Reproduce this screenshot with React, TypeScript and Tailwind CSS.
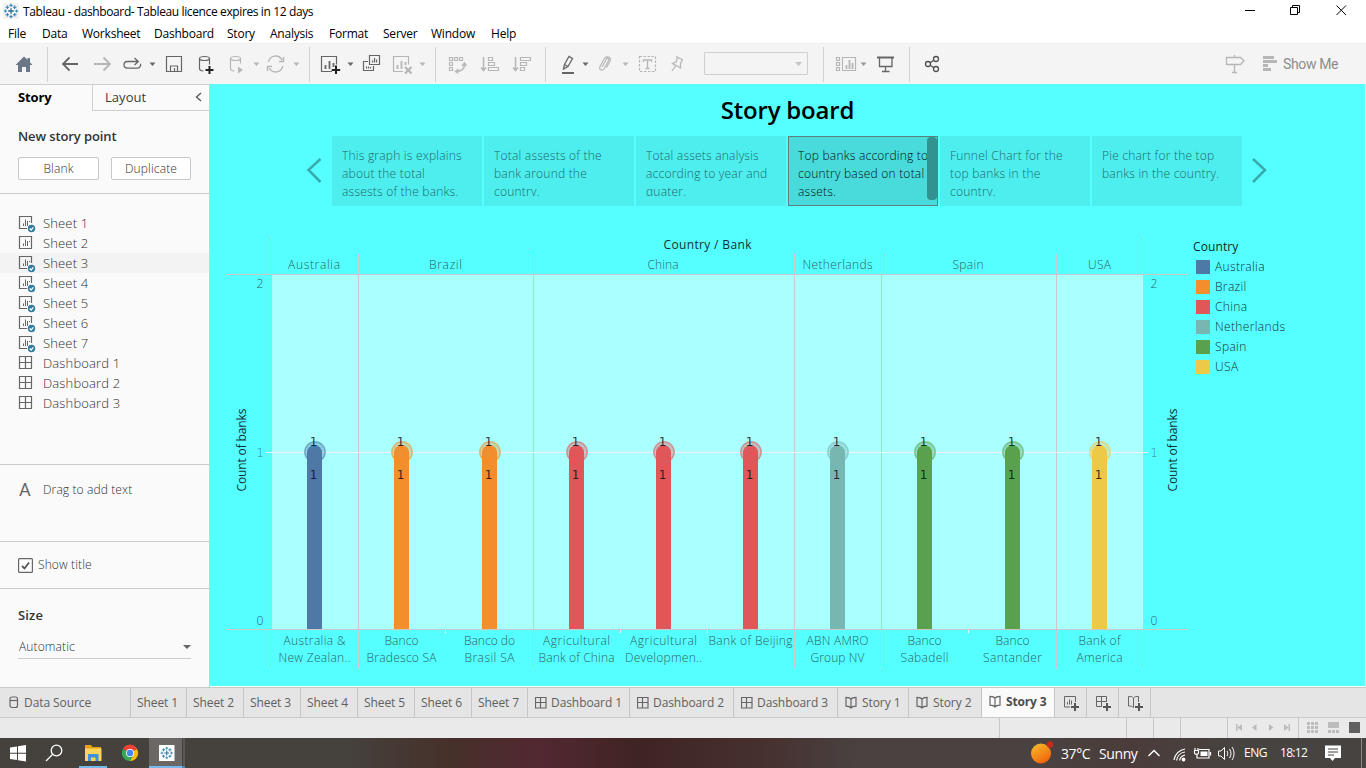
import React from "react";

type IcoProps = { x: number; w: number; y?: number; h?: number; c?: string; children?: React.ReactNode };

/* Icon cell: drawing coordinates are window coordinates. */
const Ico = ({ x, w, y = 44, h = 40, c = "#666", children }: IcoProps) => (
  <svg width={w} height={h} viewBox={`${x} ${y} ${w} ${h}`} fill="none" stroke={c} strokeWidth="1.2" className="block shrink-0">
    {children}
  </svg>
);

const Caret = ({ x, c = "#666" }: { x: number; c?: string }) => <path d={`M${x} 62.5h6l-3 3.5z`} fill={c} stroke="none" />;
const Sep = ({ x }: { x: number }) => <path d={`M${x}.5 47v35`} stroke="#d2d2d2" strokeWidth="1" />;

const LOGO = (
  <g fill="none" strokeWidth="1.1">
    <path d="M8 5.200v5.600M5.200 8h5.600" stroke="#2a6f97" strokeWidth="1.300" />
    <path d="M8 .8v3.200M6.400 2.400h3.200M8 12v3.200M6.400 13.600h3.200M2.400 6.400v3.200M.8 8h3.200M13.600 6.400v3.200M12 8h3.200" stroke="#3d86b4" />
    <path d="M4.300 2.500v3.600M2.500 4.300h3.600M11.700 2.500v3.600M9.900 4.300h3.600M4.300 9.900v3.600M2.500 11.700h3.600M11.700 9.900v3.600M9.900 11.700h3.600" stroke="#3183b5" />
  </g>
);

function TitleBar() {
  return (
    <header className="flex h-[24px] items-center bg-white pl-[3px] text-[12px] text-black">
      <svg width="16" height="16" viewBox="0 0 16 16" className="mr-[4px] bg-[#f2f2f2] -mt-[2px]">{LOGO}</svg>
      <span className="tracking-[-0.38px] whitespace-pre">Tableau - dashboard- Tableau licence expires in 12 days</span>
      <svg width="121" height="24" viewBox="1245 0 121 24" className="ml-auto" fill="none" stroke="#000" strokeWidth="1">
        <path d="M1245 10.5h10M1290.5 7.5h7v7h-7zM1292.5 7.5v-2h7v7h-2M1336.500 5.500l9.500 9.500M1346 5.500l-9.500 9.500" />
      </svg>
    </header>
  );
}

const menus = [
  ["File", "w-[34px]"], ["Data", "w-[40px]"], ["Worksheet", "w-[72px]"], ["Dashboard", "w-[73px]"], ["Story", "w-[43px]"],
  ["Analysis", "w-[59px]"], ["Format", "w-[54px]"], ["Server", "w-[48px]"], ["Window", "w-[60px]"], ["Help", "w-[40px]"],
];

function MenuBar() {
  return (
    <nav className="flex h-[19px] items-center bg-white pl-[8px] text-[12px] leading-[19px] tracking-[-0.22px] text-black">
      {menus.map(([m, w]) => (
        <span key={m} className={w}>{m}</span>
      ))}
    </nav>
  );
}

const G = "#b6b6b6";

function Toolbar() {
  return (
    <div className="flex h-[41px] items-start border-t border-[#efefef] bg-[#f4f4f4]">
      <Ico x={0} w={60}>
        <path d="M15.500 65L24 56.500l3.500 3.300V58h2.500v4.300l2.500 2.700h-2.500v7h-4v-5h-4v5h-4v-7z" fill="#6b7786" stroke="none" />
        <Sep x={47} />
      </Ico>
      <Ico x={60} w={28}><path d="M78 64H63.500M69.500 57.500L63 64l6.500 6.500" strokeWidth="1.8" /></Ico>
      <Ico x={88} w={30} c={G}><path d="M94 64h15M103.500 57.500L110 64l-6.500 6.500" strokeWidth="1.8" /></Ico>
      <Ico x={118} w={44}>
        <path d="M138 61.500h-10.500a3.500 3.300 0 000 6.600h9.500a3.500 3.300 0 003.500-4.300M134.500 58l3.800 3.500-3.800 3.500" strokeWidth="1.3" />
        <Caret x={149.500} />
      </Ico>
      <Ico x={162} w={30}><path d="M166.500 56.500h15v15h-15zM170.500 71v-5h7v5M174.500 68v3" /></Ico>
      <Ico x={192} w={32}>
        <ellipse cx="204.500" cy="58.500" rx="5" ry="2" /><path d="M199.500 58.500v10c0 1.300 1.500 2.300 4 2.500M209.500 58.500v6" />
        <path d="M209.500 66v8M205.500 70h8" stroke="#222" strokeWidth="2" />
      </Ico>
      <Ico x={224} w={38} c={G}>
        <ellipse cx="235.500" cy="58.500" rx="5" ry="2" /><path d="M230.500 58.500v10c0 1.300 1.500 2.300 4 2.500M240.500 58.500v5" />
        <path d="M238 66.500v7l5-3.500z" fill={G} stroke="none" />
        <Caret x={253.500} c={G} />
      </Ico>
      <Ico x={262} w={54} c={G}>
        <path d="M268.500 62a7.200 7.200 0 0113.500-2M282.800 66a7.200 7.200 0 01-13.500 2M283.500 57v4.500h-4.500M267.500 71v-4.500h4.500" strokeWidth="1.4" />
        <Caret x={293.500} c={G} />
        <Sep x={309} />
      </Ico>
      <Ico x={316} w={42}>
        <path d="M332 71.500h-10.500v-15h15v8" />
        <path d="M325.500 69v-4M329.500 69v-8M333.500 67v-4" strokeWidth="1.800" />
        <path d="M336 65.500v8.500M331.700 70h8.500" stroke="#222" strokeWidth="2" />
        <Caret x={347.500} />
      </Ico>
      <Ico x={358} w={30}>
        <path d="M369.500 55.500h10v9h-10zM368 61.500h-4.500v9h10v-4.500" />
        <path d="M372.500 62.500v-2M374.500 62.500v-4.500M376.500 62.500v-3M366.500 68.500v-2M368.500 68.500v-2M370.500 68.500v-1.500" />
      </Ico>
      <Ico x={388} w={54} c={G}>
        <path d="M403 71.500h-9.500v-15h15v8" />
        <path d="M397.500 69v-4M401.500 69v-8M405.500 65v-3" strokeWidth="1.800" />
        <path d="M405 67l6.500 6.500M411.500 67l-6.500 6.500" strokeWidth="2.200" />
        <Caret x={419.500} c={G} />
        <Sep x={435} />
      </Ico>
      <Ico x={442} w={32} c={G}>
        <path d="M449.500 57.500h3v3h-3zM454.500 57.500h3v3h-3zM459.500 57.500h3v3h-3zM449.500 62.500h3v3h-3zM449.500 67.500h3v3h-3z" />
        <path d="M464.500 64c0 5-3 7.500-8.500 7.500M462 66l2.500-3 2 3M458.500 69l-3 2.500 3 2" strokeWidth="1.4" />
      </Ico>
      <Ico x={474} w={32} c={G}>
        <path d="M483.500 57v13M481 67.500l2.500 3 2.500-3" strokeWidth="1.500" />
        <path d="M488.500 57.500h4v3h-4zM488.500 62.500h6v3h-6zM488.500 67.500h10v3h-10z" />
      </Ico>
      <Ico x={506} w={46} c={G}>
        <path d="M515.500 57v13M513 67.500l2.500 3 2.500-3" strokeWidth="1.500" />
        <path d="M520.500 57.500h10v3h-10zM520.500 62.500h6v3h-6zM520.500 67.500h4v3h-4z" />
        <Sep x={545} />
      </Ico>
      <Ico x={552} w={42}>
        <path d="M563.500 69l1-4.500 4.500-8 3.500 2-4.500 8zM564.500 64.500l3.500 2" strokeWidth="1.300" />
        <path d="M562 73h12" strokeWidth="2" />
        <Caret x={582.500} />
      </Ico>
      <Ico x={594} w={40} c={G}>
        <path d="M602 67l4.500-8c1-1.500 3-.5 2.300 1.200l-4.500 8.300c-2 3-5.800 1-4.300-2l4-7.500c2-3.500 8-2.500 6 2l-3.500 6.500" />
        <Caret x={622.500} c={G} />
      </Ico>
      <Ico x={634} w={30} c={G}>
        <path d="M639.500 56.500h16v15h-16z" strokeDasharray="2.500 1.500" />
        <path d="M643.500 62v-2h8v2M647.500 60v8.500M645.500 68.500h4" strokeWidth="1.300" />
      </Ico>
      <Ico x={664} w={40} c={G}>
        <path d="M676 56.500l7 3.500M677.500 57.500l-1.500 4.500-3.500 1.500 8 4.500 0-4.500 2-4M675.500 66l-3.500 5" strokeWidth="1.300" />
      </Ico>
      <div className="mt-[8px] flex h-[23px] w-[104px] items-center justify-end rounded-[1px] border border-[#cfcfcf] pr-[5px]">
        <svg width="7" height="4"><path d="M0 0h7L3.500 4z" fill="#c4c4c4" /></svg>
      </div>
      <Ico x={808} w={62} c={G}>
        <Sep x={823} />
        <path d="M836.500 57.500h3v3h-3zM836.500 62.500h3v3h-3zM836.500 67.500h3v3h-3zM842.500 57.500h13v13h-13z" />
        <path d="M846.500 69v-4M849.500 69v-9M852.500 69v-6" strokeWidth="1.800" />
        <Caret x={860.500} c="#999" />
      </Ico>
      <Ico x={870} w={48}>
        <path d="M877 57.500h17" strokeWidth="2" /><path d="M879.500 58v8.500h12.500v-8.500M885.500 67v4.500M882 71.500h7.500" strokeWidth="1.3" />
        <Sep x={909} />
      </Ico>
      <Ico x={918} w={30} c="#505050">
        <g strokeWidth="1.300"><circle cx="928" cy="64" r="2.500" /><circle cx="936" cy="59" r="2.500" /><circle cx="936" cy="69" r="2.500" /><path d="M930.200 62.700l3.600-2.400M930.200 65.300l3.600 2.400" /></g>
      </Ico>
      <div className="ml-auto flex items-center">
        <Ico x={1220} w={38} c={G}><path d="M1226.500 57.500h14l3.500 3.300-3.500 3.700h-14zM1234.500 55v2.500M1234.500 64.500v8M1232 72.500h5" strokeWidth="1.300" /></Ico>
        <Ico x={1258} w={25} c={G}>
          <path d="M1263 57.500h11M1263 61.500h14M1263 65.500h5M1263 69.500h8" strokeWidth="3" />
        </Ico>
        <span className="w-[83px] font-['Roboto'] text-[14px] tracking-[-0.35px] text-[#8c8c8c]">Show Me</span>
      </div>
    </div>
  );
}

const SheetIcon = ({ check }: { check?: boolean }) => (
  <svg width="18" height="20" viewBox="0 0 18 20" fill="none" stroke="#666" className="mr-[7px] block shrink-0">
    <path d={check ? "M9 15.500H1.500v-12h12V10" : "M1.500 3.500h12v12h-12z"} strokeWidth="1.200" />
    <path d="M5.500 13V10.500M7.500 13V6.500M9.500 13V8M11.500 9V8" />
    {check && (<><circle cx="13.500" cy="15.500" r="4.300" fill="#fafafa" stroke="none" /><circle cx="13.500" cy="15.500" r="3.700" fill="#2f7da4" stroke="none" /><path d="M11.700 15.500l1.400 1.500 2.300-2.700" stroke="#fff" strokeWidth="1.200" /></>)}
  </svg>
);

const GridIcon = ({ small }: { small?: boolean }) => (
  <svg width={small ? 12 : 18} height={small ? 12 : 20} viewBox={small ? "1 1 12 12" : "0 -2 18 20"} fill="none" stroke="#666" className={small ? "mr-[4px] block shrink-0" : "mr-[7px] block shrink-0"}>
    <path d={small ? "M1.500 1.500h10.500v10.500h-10.500zM6.500 1.500v10.500M1.500 6.500h10.500" : "M1.500 1.500h12v12h-12zM7.500 1.500v12M1.500 7.500h12"} strokeWidth="1.200" />
  </svg>
);

const sheets = [1, 2, 3, 4, 5, 6, 7];

function SidePanel() {
  return (
    <aside className="flex h-[603px] w-[210px] shrink-0 flex-col border-r border-t border-[#cfcfcf] bg-[#fafafa] text-[#303030]">
      <div className="flex h-[26px] shrink-0 text-[13px] leading-[25px]">
        <div className="w-[92px] pl-[18px] font-bold tracking-[-0.1px] text-black">Story</div>
        <div className="flex flex-1 justify-between border-b border-l border-[#cfcfcf] pl-[12px] pr-[7px] tracking-[0.05px] text-[#3c3c3c]">
          Layout
          <svg width="7" height="10" className="mt-[7px]" fill="none" stroke="#555" strokeWidth="1.300"><path d="M6 1L1.500 5 6 9" /></svg>
        </div>
      </div>
      <section className="h-[83px] shrink-0 border-b border-[#cbcbcb] px-[18px] pt-[16px]">
        <h2 className="text-[13px] font-semibold leading-[18px] tracking-[-0.1px] text-[#333]">New story point</h2>
        <div className="mt-[12px] flex gap-[12px] text-[12px] font-light leading-[20px] tracking-[0.15px]">
          <button className="h-[23px] w-[81px] rounded-[2px] border border-[#c8c8c8] bg-white">Blank</button>
          <button className="h-[23px] w-[80px] rounded-[2px] border border-[#c8c8c8] bg-white">Duplicate</button>
        </div>
      </section>
      <section className="h-[271px] shrink-0 border-b border-[#cbcbcb] pt-[19px] text-[13px] font-light leading-[20px] tracking-[0.15px]">
        {sheets.map((n) => (
          <div key={n} className={`flex h-[20px] items-center pl-[18px] ${n === 3 ? "bg-[#f3f3f3]" : ""}`}>
            <SheetIcon check={n !== 2} />Sheet {n}
          </div>
        ))}
        {[1, 2, 3].map((n) => (
          <div key={n} className="flex h-[20px] items-center pl-[18px]"><GridIcon />Dashboard {n}</div>
        ))}
      </section>
      <section className="flex h-[77px] shrink-0 border-b border-[#cbcbcb] pl-[19px] pt-[15px] leading-[20px]">
        <span className="w-[24px] font-['Roboto'] text-[18px] text-[#666]">A</span>
        <span className="text-[12px] font-light tracking-[0.12px]">Drag to add text</span>
      </section>
      <section className="flex h-[47px] shrink-0 items-center border-b border-[#cbcbcb] pl-[18px] text-[12px]">
        <svg width="15" height="15" fill="none" className="mr-[5px]"><rect x=".6" y=".6" width="13.800" height="13.800" rx="1" stroke="#666" strokeWidth="1.200" fill="#fff" /><path d="M4 8l2.500 2.500L11 4.500" stroke="#555" strokeWidth="1.800" /></svg>
        <span className="font-light tracking-[0.12px]">Show title</span>
      </section>
      <section className="px-[18px] pt-[17px]">
        <h2 className="text-[13px] font-semibold leading-[18px] tracking-[0.15px] text-[#333]">Size</h2>
        <div className="mt-[12px] flex h-[23px] items-center justify-between border-b border-[#cbcbcb] pl-[1px] text-[12px] font-light tracking-[0.12px]">
          Automatic
          <svg width="8" height="4"><path d="M0 0h8L4 4z" fill="#666" /></svg>
        </div>
      </section>
    </aside>
  );
}

const points = [
  ["This graph is explains", "about the total", "assests of the banks."],
  ["Total assests of the", "bank around the", "country."],
  ["Total assets analysis", "according to year and", "quater."],
  ["Top banks according to", "country based on total", "assets."],
  ["Funnel Chart for the", "top banks in the", "country."],
  ["Pie chart for the top", "banks in the country."],
];

function StoryPoints() {
  return (
    <div className="flex items-start pl-[96px]">
      <svg width="26" height="26" fill="none" stroke="#3aabab" strokeWidth="2.500" className="mt-[21px]"><path d="M14.500 2L2.500 13l12 12" /></svg>
      <div className="flex gap-[2px]">
        {points.map((p, i) => (
          <div
            key={i}
            className={`flex h-[70px] w-[150px] justify-between overflow-hidden text-[12px] leading-[18px] whitespace-nowrap ${
              i === 3 ? "border border-[#5c7f7f] bg-[#49dbdb] pl-[9px] pt-[10px] text-[#041010]" : "bg-[#4eeeee] pl-[10px] pt-[11px] text-[#1c6a6a]"
            }`}
          >
            <div className="h-[49px] w-[130px] overflow-hidden font-light tracking-[0.22px]">
              {p.map((l) => <div key={l}>{l}</div>)}
            </div>
            {i === 3 && <div className="-mt-[10px] h-[63px] w-[10px] shrink-0 rounded-[4px] bg-[#319292]" />}
          </div>
        ))}
      </div>
      <svg width="26" height="26" fill="none" stroke="#3aabab" strokeWidth="2.500" className="ml-[9px] mt-[21px]"><path d="M2 2l12 11L2 25" /></svg>
    </div>
  );
}

const C = { au: "#4e79a7", br: "#f28e2b", cn: "#e15759", nl: "#76b7b2", es: "#59a14f", us: "#edc948" };

type Bar = { x: number; c: string; l1: string; w1: number; l2?: string; w2?: number };
const bars: Bar[] = [
  { x: 307, c: C.au, l1: "Australia &", w1: 62, l2: "New Zealan..", w2: 72 },
  { x: 394, c: C.br, l1: "Banco", w1: 34, l2: "Bradesco SA", w2: 70 },
  { x: 482, c: C.br, l1: "Banco do", w1: 51, l2: "Brasil SA", w2: 50 },
  { x: 569, c: C.cn, l1: "Agricultural", w1: 67, l2: "Bank of China", w2: 76 },
  { x: 656, c: C.cn, l1: "Agricultural", w1: 67, l2: "Developmen..", w2: 77 },
  { x: 743, c: C.cn, l1: "Bank of Beijing", w1: 84 },
  { x: 830, c: C.nl, l1: "ABN AMRO", w1: 62, l2: "Group NV", w2: 54 },
  { x: 917, c: C.es, l1: "Banco", w1: 34, l2: "Sabadell", w2: 48 },
  { x: 1005, c: C.es, l1: "Banco", w1: 34, l2: "Santander", w2: 59 },
  { x: 1092, c: C.us, l1: "Bank of", w1: 42, l2: "America", w2: 46 },
];
const groups: [string, number, number][] = [
  ["Australia", 314, 52], ["Brazil", 445.5, 33], ["China", 663, 31], ["Netherlands", 837.5, 70], ["Spain", 968, 31], ["USA", 1099.5, 23],
];

function Chart() {
  return (
    <svg width="972" height="450" viewBox="218 230 972 450" className="block shrink-0" fontSize="12" fontWeight="300">
      <rect x="272" y="275" width="871" height="354" fill="#aaffff" />
      <path d="M271.500 234v435M1143.500 234v435" stroke="#a9d8d8" strokeWidth="1" />
      <path d="M358.500 254v415M533.500 254v415M794.500 254v415M881.500 254v415M1056.500 254v415" stroke="#c9c9c9" strokeWidth="1" />
      <path d="M226 274.500h962M226 629.500h962" stroke="#c9c9c9" strokeWidth="1" />
      <path d="M266 452.500h882M445.500 630v3M620.500 630v3M707.500 630v3M968.500 630v3" stroke="#f3f1f1" strokeWidth="1" />
      {bars.map((b) => (
        <g key={b.x}>
          <circle cx={b.x + 8} cy="452" r="11" fill={b.c} opacity="0.350" />
          <circle cx={b.x + 8} cy="452" r="10" fill="none" stroke={b.c} strokeWidth="1.400" opacity="0.450" />
          <circle cx={b.x + 7.5} cy="452.500" r="7.500" fill={b.c} />
          <rect x={b.x} y="452" width="15" height="177" fill={b.c} />
          <g fontFamily="DejaVu Sans" fontSize="12" fontWeight="400" textAnchor="middle" fill="#101010" fillOpacity="0.85">
            <text x={b.x + 6.500} y="446">1</text>
            <text x={b.x + 6.500} y="479">1</text>
          </g>
          <g fill="#2b6464" textAnchor="middle">
            <text x={b.x + 7.5} y="645" textLength={b.w1}>{b.l1}</text>
            {b.l2 && <text x={b.x + 7.5} y="662" textLength={b.w2}>{b.l2}</text>}
          </g>
        </g>
      ))}
      <g fill="#2b6464" textAnchor="middle">
        {groups.map(([n, x, w]) => <text key={n} x={x} y="269" textLength={w}>{n}</text>)}
        <text x="260" y="288">2</text><text x="260" y="457" fontFamily="DejaVu Sans" fillOpacity="0.800">1</text><text x="260" y="625">0</text>
        <text x="1154" y="288">2</text><text x="1154" y="457" fontFamily="DejaVu Sans" fillOpacity="0.800">1</text><text x="1154" y="625">0</text>
      </g>
      <g fill="#123232" textAnchor="middle" fontWeight="400">
        <text x="707.500" y="249" textLength="88">Country / Bank</text>
        <text transform="translate(246 450) rotate(-90)" textLength="83">Count of banks</text>
        <text transform="translate(1177 450) rotate(-90)" textLength="83">Count of banks</text>
      </g>
    </svg>
  );
}

const legend = [
  ["Australia", "bg-[#4e79a7]"], ["Brazil", "bg-[#f28e2b]"], ["China", "bg-[#e15759]"],
  ["Netherlands", "bg-[#76b7b2]"], ["Spain", "bg-[#59a14f]"], ["USA", "bg-[#edc948]"],
];

function Canvas() {
  return (
    <main className="flex h-[602px] flex-1 flex-col border-r border-[#d9efef] bg-[#55ffff]">
      <h1 className="pt-[8px] text-center text-[24px] font-semibold leading-[36px] text-black">
        <span className="tracking-[-0.2px]">Story board</span>
      </h1>
      <div className="mt-[8px]"><StoryPoints /></div>
      <div className="mt-[24px] flex pl-[8px]">
        <Chart />
        <div className="pl-[3px] pt-[7px] text-[12px] font-light tracking-[0.35px] text-[#0f3434]">
          <div className="h-[20px] font-normal leading-[20px] tracking-[0.1px] text-[#0c2a2a]">Country</div>
          {legend.map(([n, c]) => (
            <div key={n} className="flex h-[20px] items-center pl-[3px]">
              <span className={`mr-[5px] h-[14px] w-[14px] ${c}`} />{n}
            </div>
          ))}
        </div>
      </div>
    </main>
  );
}

const Book = () => (
  <svg width="12" height="13" fill="none" stroke="#666" strokeWidth="1.200" className="mr-[5px] block shrink-0">
    <path d="M6 3.200C5 1.500 3.800 1.300 1 1.300v8.900c2.200 0 4 .2 5 1.800 1-1.600 2.800-1.800 5-1.800V1.300C8.200 1.300 7 1.500 6 3.200zM6 3.200V12" />
  </svg>
);
const Plus = () => <path d="M12 9v8M8 13h8" stroke="#555" strokeWidth="2" />;

const sheetW = ["w-[56px]", "w-[57px]", "w-[57px]", "w-[57px]", "w-[57px]", "w-[57px]", "w-[56px]"];
const dashW = ["w-[102px]", "w-[104px]", "w-[104px]"];
const storyW = ["w-[71px]", "w-[73px]"];
const cell = "flex shrink-0 items-center border-r border-[#c6c6c6] whitespace-nowrap";

function Tabs() {
  return (
    <div className="flex h-[31px] border-y border-[#c9c9c9] bg-[#e5e5e5] text-[12px] tracking-[-0.08px] text-[#606060]">
      <div className={`${cell} w-[131px] pl-[9px]`}>
        <svg width="10" height="13" fill="none" stroke="#666" strokeWidth="1.200" className="mr-[5px]"><rect x="1" y="1" width="7.500" height="10.500" rx="2" /><path d="M1 4.500h7.500" /></svg>
        Data Source
      </div>
      {sheets.map((n, i) => <div key={n} className={`${cell} ${sheetW[i]} pl-[6px]`}>Sheet {n}</div>)}
      {dashW.map((w, i) => <div key={w + i} className={`${cell} ${w} pl-[7px]`}><GridIcon small />Dashboard {i + 1}</div>)}
      {storyW.map((w, i) => <div key={w} className={`${cell} ${w} pl-[7px]`}><Book />Story {i + 1}</div>)}
      <div className={`${cell} w-[73px] bg-[#fafafa] pb-[2px] pl-[7px] font-bold tracking-[-0.15px] text-[#4c4c4c]`}><Book />Story 3</div>
      <div className={`${cell} w-[32px] pl-[8px]`}>
        <svg width="17" height="18" fill="none" stroke="#666"><path d="M7 13H1.500V2.500h11V8M4.500 10.500V8M6.500 10.500V5.500M8.500 10.500V6.500" /><Plus /></svg>
      </div>
      <div className={`${cell} w-[32px] pl-[8px]`}>
        <svg width="17" height="18" fill="none" stroke="#666"><path d="M7 12.500H1.500V2.500h10V8M6.500 2.500v10M1.500 7.500h10" /><Plus /></svg>
      </div>
      <div className={`${cell} w-[32px] pl-[8px]`}>
        <svg width="17" height="18" fill="none" stroke="#666"><path d="M6.500 4C5 2.500 4 2.500 1.500 2.500v9.500c2.500 0 3.500.2 5 1.500M6.500 4c1.500-1.500 2.500-1.500 5-1.500V8M6.500 4v9.500" /><Plus /></svg>
      </div>
    </div>
  );
}

function StatusBar() {
  return (
    <div className="flex h-[20px] bg-[#eaeaea]">
      <div className={`${cell} w-[1000px]`} />
      <div className={`${cell} w-[127px]`} />
      <div className={`${cell} w-[27px]`} />
      <div className={`${cell} w-[27px]`} />
      <div className={`${cell} w-[47px]`} />
      <div className={`${cell} w-[71px]`}>
        <svg width="70" height="20" viewBox="1228 718 70 20" fill="#bcbcbc">
          <path d="M1236 724h1.500v7h-1.500zM1242 724v7l-4.500-3.500zM1256.500 724v7l-4.500-3.500zM1269 724v7l4.500-3.500zM1284 724v7l4.500-3.500zM1288.500 724h1.500v7h-1.500z" />
        </svg>
      </div>
      <svg width="67" height="20" viewBox="1299 718 67 20" fill="#bcbcbc">
        {[1307, 1311, 1315].map((x) => [722, 726, 730].map((y) => <rect key={`${x}${y}`} x={x} y={y} width="3" height="3" />))}
        <path d="M1328 722h11v6h-11zM1328 730h3v3h-3zM1332 730h3v3h-3zM1336 730h3v3h-3z" />
        <rect x="1349" y="722" width="11" height="11" fill="#606060" />
      </svg>
    </div>
  );
}

function Taskbar() {
  return (
    <footer className="flex h-[30px] justify-between bg-[linear-gradient(90deg,#45413d_0px,#45413d_350px,#46302a_450px,#522831_540px,#3f2424_640px,#46302f_760px,#494240_860px,#494240_1050px,#4a3c3a_1130px,#474340_1240px,#474340_1366px)] text-white">
      <svg width="190" height="30" viewBox="0 738 190 30">
        <path d="M10 747.500l7-1v6.300h-7zM18 746.300l8-1.200v7.700h-8zM10 753.800h7v6.200l-7-1zM18 753.800h8v7.700l-8-1.200z" fill="#fff" />
        <g fill="none" stroke="#fff" strokeWidth="1.300"><circle cx="56.500" cy="750.500" r="5.300" /><path d="M52.500 754.500L46 761" /></g>
        <path d="M85 745h6l1.500 2H101v14H85z" fill="#e5a50a" />
        <path d="M85 748.500h16.500V761H85z" fill="#fbd45d" />
        <path d="M88 761v-7h10.500v7h-3v-3.500h-4.500v3.500z" fill="#3c92dc" />
        <path d="M79 766h28v2H79z" fill="#76b9ed" />
        <path d="M130 753L123 749a8 8 0 0114 0z" fill="#ea4335" /><path d="M130 753h0l7-4a8 8 0 01-7 12z" fill="#fbbc05" />
        <path d="M123 749a8 8 0 007 12l3.500-6z" fill="#34a853" /><path d="M123 749a8 8 0 0114 0l-7 .5z" fill="#ea4335" />
        <circle cx="130" cy="753" r="4" fill="#fff" /><circle cx="130" cy="753" r="3.200" fill="#4285f4" />
        <path d="M149 738h33v28h-33z" fill="#6b6764" /><path d="M183 738h2v28h-2z" fill="#5b5754" />
        <path d="M149 766h33v2h-33z" fill="#76b9ed" /><path d="M182 766h3v2h-3z" fill="#5088b5" />
        <rect x="159" y="745" width="15.500" height="16" fill="#fff" />
        <svg x="159" y="745" width="15.500" height="16" viewBox="-1 -1 18 18">{LOGO}</svg>
      </svg>
      <div className="flex items-center">
        <svg width="30" height="30" viewBox="1030 738 30 30">
          <defs><linearGradient id="sun" x1="0" y1="0" x2=".6" y2="1"><stop offset="0" stopColor="#f7c02f" /><stop offset="1" stopColor="#f0660a" /></linearGradient></defs>
          <circle cx="1041" cy="753.500" r="10" fill="url(#sun)" /><circle cx="1050" cy="744.500" r="3.200" fill="#c42b1c" />
        </svg>
        <span className="flex w-[86px] pl-[1px] pt-px text-[14px] tracking-[-0.4px]"><span className="w-[38px]">37°C</span><span>Sunny</span></span>
        <svg width="98" height="30" viewBox="1146 738 98 30" fill="none" stroke="#fff" strokeWidth="1.200">
          <path d="M1148.500 756l5.500-5.500 5.500 5.500" strokeWidth="1.400" />
          <path d="M1174 760a13 13 0 0111-11M1176.500 760.500a10 10 0 018.500-8.500M1179.500 760.500a7 7 0 015.500-5.500" /><circle cx="1183.500" cy="759.500" r="1.300" fill="#fff" />
          <path d="M1199 749.500h10v8.500h-12v-3M1210.500 752v3.500M1194 750.500h5M1195 748v2.500M1198 748v2.500M1194.500 750.500v2c0 2.500 4 2.500 4 0v-2" /><path d="M1200.500 751.500h7v4.500h-7z" fill="#fff" stroke="none" />
          <path d="M1218.500 751h2.500l3.500-3.500v12l-3.500-3.500h-2.500zM1227 751c1 1.500 1 3.500 0 5M1229.500 749c2 3 2 6 0 9M1232 747c2.700 4 2.700 9 0 13" strokeWidth="1" />
        </svg>
        <span className="w-[36px] text-[12px] tracking-[-0.5px]">ENG</span>
        <span className="w-[43px] text-[12px] tracking-[-0.7px]">18:12</span>
        <svg width="43" height="30" viewBox="1323 738 43 30">
          <path d="M1325 745.500h16v12.500h-6l-2.500 3-2.500-3h-5z" fill="#fff" /><path d="M1328 749h10M1328 752h10M1328 755h6" stroke="#45413d" strokeWidth="1" />
          <path d="M1361.500 738v30" stroke="#8a8683" />
        </svg>
      </div>
    </footer>
  );
}

export default function App() {
  return (
    <div className="h-[768px] w-[1366px] overflow-hidden bg-white font-['Open_Sans','Noto_Sans',sans-serif]">
      <TitleBar />
      <MenuBar />
      <Toolbar />
      <div className="flex h-[603px]">
        <SidePanel />
        <Canvas />
      </div>
      <Tabs />
      <StatusBar />
      <Taskbar />
    </div>
  );
}
